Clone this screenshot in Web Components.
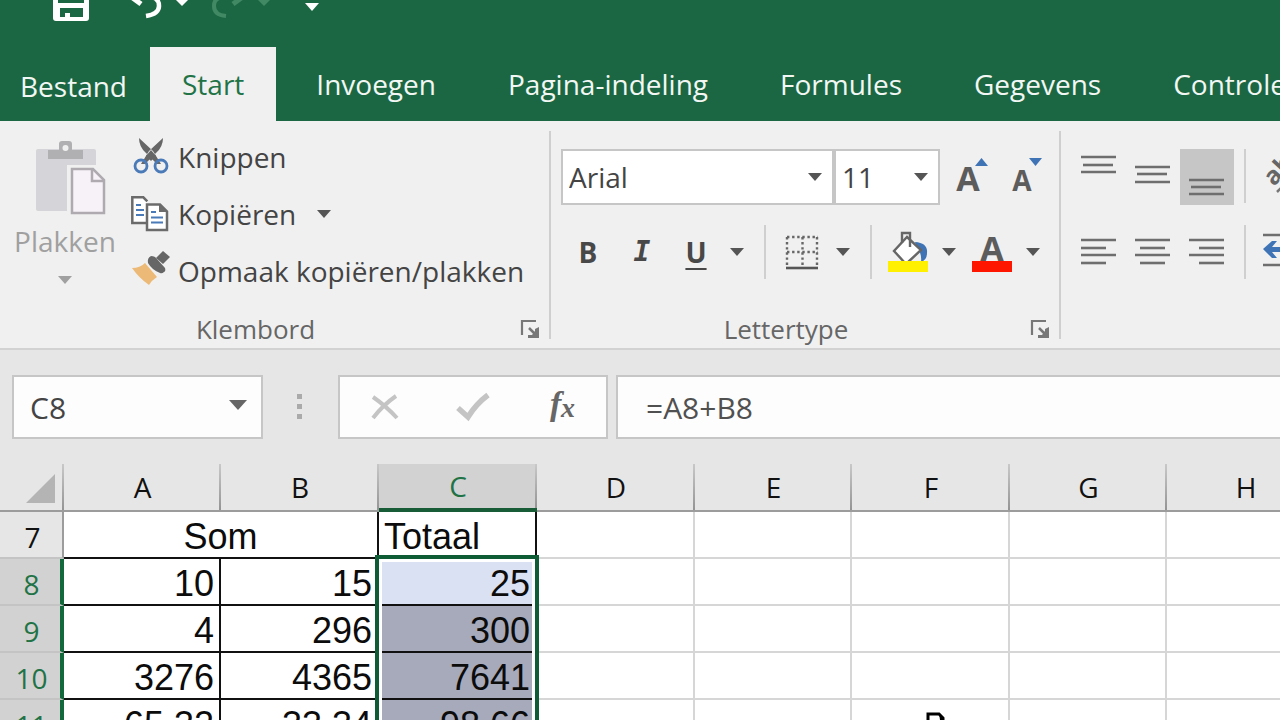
<!DOCTYPE html>
<html lang="nl">
<head>
<meta charset="utf-8">
<meta name="viewport" content="width=device-width, initial-scale=1">
<title>Werkblad</title>
<style>
  html, body { height: 100%; }
  body { margin: 0; overflow: hidden; background: #fff; color: #444; font: 28px/36px "Open Sans", "Noto Sans", sans-serif; }
</style>
</head>
<body>
<excel-app></excel-app>

<script>
(function () {
  // ---- icon set: [width, height, markup] ----
  const lines = (rows) => rows.map(([x, y, w]) => `<path d="M${x} ${y}h${w}" stroke="#6e6e6e" stroke-width="2.6"/>`).join("");
  const ICONS = {
    save: [36, 22, `<path fill="#fff" d="M0-10h36v28q0 3-3 3H3q-3 0-3-3zM5-10v13h26v-13zM7 8v9h5v-4h5v4h13V8z" fill-rule="evenodd"/>`],
    undo: [34, 20, `<path d="M1-4L12 4" stroke="#fff" stroke-width="5"/><path d="M17-3Q30-4 30 6q0 8-13 10" fill="none" stroke="#fff" stroke-width="4.5"/>`],
    redo: [34, 20, `<path d="M33-4L22 4" stroke="#418864" stroke-width="5"/><path d="M14-3Q3-3 3 6q0 9 12 10" fill="none" stroke="#418864" stroke-width="4"/>`],
    tip: [14, 20, `<path d="M0-1h14L7 6z" fill="currentColor"/>`],
    customize: [14, 20, `<path d="M0 3h14L7 11z" fill="#fff"/>`],
    arrow: [14, 8, `<path d="M0 0h14L7 8z" fill="currentColor"/>`],
    wide: [18, 10, `<path d="M0 0h18L9 10z" fill="currentColor"/>`],
    paste: [70, 76, `<rect y="8" width="60" height="62" rx="2" fill="#d5d5d9"/>
      <path d="M31 24h40v54H31z" fill="#f0f0f0"/>
      <path d="M12 18v-9h11V3q0-3 3-3h7q3 0 3 3v6h11v9z" fill="#b0b0b2"/><circle cx="29.5" cy="7" r="3" fill="#f0f0f0"/>
      <path d="M36 28h21l11 11v33H36z" fill="#f7f2f8" stroke="#aeaab0" stroke-width="2.5"/><path d="M56 28v12h12" fill="none" stroke="#aeaab0" stroke-width="2.5"/>`],
    cut: [38, 40, `<path d="M8 1Q8 10 15 16L26 27h4L22 14zM32 1Q32 10 25 16L14 27h-4L18 14z" fill="#666"/><path d="M20 13l5 6-5 5-5-5z" fill="#666"/>
      <g fill="none" stroke="#4a7ab8" stroke-width="2.8"><circle cx="10" cy="29" r="6"/><circle cx="30" cy="29" r="6"/></g>`],
    copy: [38, 36, `<path d="M15 27H1.3V1.3h11l4 4" fill="#fff" stroke="#6b6b6b" stroke-width="2.5"/>
      <path d="M5 9h5M5 14h8M5 19h8" stroke="#4a7ab8" stroke-width="2.2"/>
      <path d="M16 8.5h13l7 7V34H16z" fill="#fff" stroke="#6b6b6b" stroke-width="2.5"/><path d="M28 8v8h8z" fill="#6b6b6b"/>
      <path d="M20 16h5M20 21.5h12M20 26.5h12" stroke="#4a7ab8" stroke-width="2.2"/>`],
    brush: [40, 40, `<path d="M1 17q8 0 13-5l12 14q-5 3-8 8Q8 27 1 17z" fill="#ecba76"/>
      <path d="M20 5q4 0 6 3l8 9q1 3-1 4-2 2-4 1-8-3-12-10-1-5 3-7z" fill="#666"/><path d="M25 7l7-7 7 6-7 7z" fill="#666"/>`],
    launcher: [18, 18, `<path d="M1 15V1h14" fill="none" stroke="#777" stroke-width="2.2"/><path d="M8 8l6 6" stroke="#777" stroke-width="2.5"/><path d="M18 7v11H7v-3h4l3-4V9z" fill="#777"/>`],
    grow: [54, 56, `<text x="23" y="42" text-anchor="middle" font-weight="700" font-size="34" fill="#5c5c5c">A</text><path d="M30 17h13L36.5 9z" fill="#3e74b5"/>`],
    shrink: [54, 56, `<text x="23" y="42" text-anchor="middle" font-weight="700" font-size="28" fill="#5c5c5c">A</text><path d="M30 9h13L36.5 17z" fill="#3e74b5"/>`],
    borders: [34, 36, `<path d="M2 3h31M2 18h31" stroke="#666" stroke-width="2.4" stroke-dasharray="2.4 2.7"/>
      <path d="M2 3v28M17.500 3v28M32 3v28" stroke="#666" stroke-width="2.4" stroke-dasharray="2.4 2.7"/><path d="M1 34h32" stroke="#555" stroke-width="2.6"/>`],
    bucket: [40, 40, `<path d="M27 10q13 1 12 11 0 7-6 9 1-9-4-14z" fill="#3e74b5"/>
      <path d="M19 5L33 18 18 32 6 19z" fill="#fff" stroke="#666" stroke-width="2.4"/>
      <path d="M14 11V1h8V15" fill="none" stroke="#666" stroke-width="2.4"/><path d="M0 29h40v11H0z" fill="#ffef00"/>`],
    color: [40, 40, `<text x="20" y="29" text-anchor="middle" font-weight="700" font-size="34" fill="#5c5c5c">A</text><path d="M0 29h40v11H0z" fill="#ff1600"/>`],
    top: [54, 56, lines([[9, 8, 35], [11, 16, 30], [9, 23, 35]])],
    middle: [54, 56, lines([[9, 18, 35], [11, 25, 30], [9, 33, 35]])],
    bottom: [54, 56, lines([[9, 31, 35], [11, 38, 30], [9, 45, 35]])],
    left: [54, 54, lines([[9, 15, 35], [9, 23, 25], [9, 30, 35], [9, 38, 25]])],
    center: [54, 54, lines([[9, 15, 35], [14, 23, 25], [9, 30, 35], [14, 38, 25]])],
    right: [54, 54, lines([[9, 15, 35], [19, 23, 25], [9, 30, 35], [19, 38, 25]])],
    rotate: [54, 56, `<text transform="translate(28 38) rotate(-47)" font-weight="700" font-size="25" fill="#666">ab</text><path d="M31 43L52 22" stroke="#777" stroke-width="2.5"/>`],
    indent: [54, 54, lines([[17, 10, 35], [36, 20, 16], [36, 30, 16], [17, 40, 35]]) + `<path d="M17 24l9-8h5l-5 6h9v5h-9l5 6h-5z" fill="#3e74b5"/>`],
    cancel: [28, 26, `<path d="M2 3q13 9 24 21M25 2Q12 11 2 24" fill="none" stroke="#c4c4c4" stroke-width="4"/>`],
    enter: [34, 28, `<path d="M2 15l10 9Q20 11 32 2" fill="none" stroke="#c4c4c4" stroke-width="5.5"/>`],
    fx: [34, 34, `<g font-family="Liberation Serif, serif" font-style="italic" font-weight="700" fill="#666"><text x="4" y="25" font-size="34">f</text><text x="15" y="27" font-size="28">x</text></g>`],
    dots: [6, 26, `<path d="M0 0h5v5H0zM0 10h5v5H0zM0 20h5v5H0z" fill="#aaa"/>`],
    corner: [30, 30, `<path d="M30 1v29H1z" fill="#b4b4b4"/>`],
    pointer: [22, 24, `<path d="M3 24V2h11l4 4v18" fill="#fff" stroke="#000" stroke-width="3"/><path d="M14 1l5 5v18h-4V8z" fill="#000"/>`],
  };

  // base class: stamps css + html into an open shadow root
  class Base extends HTMLElement {
    constructor() { super(); this.attachShadow({ mode: "open" }); }
    connectedCallback() {
      this.shadowRoot.innerHTML = `<style>
        *,*::before,*::after{box-sizing:border-box}
        button,input,select{font:inherit;color:inherit;background:none;border:0;margin:0;padding:0;border-radius:0;outline:0}
        ${this.css()}</style>${this.html()}`;
    }
  }

  class AppIcon extends Base {
    css() { return `:host{display:block;flex:none} svg{display:block;overflow:visible}`; }
    html() {
      const [w, h, body] = ICONS[this.getAttribute("name")];
      return `<svg width="${w}" height="${h}" viewBox="0 0 ${w} ${h}" aria-hidden="true">${body}</svg>`;
    }
  }

  class QuickBar extends Base {
    css() {
      return `:host{display:flex;align-items:flex-start;height:47px;padding-left:53px;overflow:hidden;color:#fff}
        button{display:flex;margin-right:12px}
        .save{margin-right:40px}.tip{margin-right:22px}.dim{margin-right:34px;color:#418864}`;
    }
    html() {
      return `<button class="save" aria-label="Opslaan"><app-icon name="save"></app-icon></button>
        <button aria-label="Ongedaan maken"><app-icon name="undo"></app-icon></button>
        <button class="tip" aria-label="Meer stappen"><app-icon name="tip"></app-icon></button>
        <button aria-label="Opnieuw"><app-icon name="redo"></app-icon></button>
        <button class="dim" aria-label="Meer stappen opnieuw"><app-icon name="tip"></app-icon></button>
        <button aria-label="Werkbalk aanpassen"><app-icon name="customize"></app-icon></button>`;
    }
  }

  class RibbonTab extends Base {
    css() {
      return `:host{display:block;flex:none}
        a{display:flex;align-items:center;height:74px;padding:0 32px;color:#f2f7f4;text-decoration:none;white-space:nowrap}
        :host([file]) a{padding:4px 23px 0 20px}
        :host([active]) a{background:#f0f0f0;color:#217346}`;
    }
    html() { return `<a href="#"><slot></slot></a>`; }
  }

  class RibbonTabs extends Base {
    css() { return `:host{display:flex;overflow:hidden} ::slotted(ribbon-tab:nth-child(n+3)){margin-left:8px}`; }
    html() { return `<slot></slot>`; }
  }

  class RibbonGroup extends Base {
    css() {
      return `:host{display:flex;flex-direction:column;flex:none;height:208px;border-right:2px solid #cfcfcf}
        :host([open]){border-right:0}
        .body{flex:1}
        footer{display:flex;align-items:center;height:20px;padding-right:10px;font-size:26px;line-height:20px;color:#666}
        span{flex:1;text-align:center}
        button{display:flex;margin-left:10px}`;
    }
    html() {
      const label = this.getAttribute("label");
      return `<div class="body"><slot></slot></div>` + (label ? `<footer><span>${label}</span><button aria-label="${label} instellingen"><app-icon name="launcher"></app-icon></button></footer>` : "");
    }
  }

  class ClipboardTools extends Base {
    css() {
      return `:host{display:flex;height:171px}
        .paste{display:flex;flex-direction:column;align-items:center;width:130px;padding-top:10px;color:#a0a0a0}
        .paste app-icon[name=paste]{margin-left:12px}
        .paste app-icon[name=arrow]{margin-top:17px}
        .paste span{line-height:36px;margin-top:6px}
        .list{display:grid;grid-auto-rows:52px;row-gap:5px;align-content:start}
        .list button{display:flex;align-items:center;white-space:nowrap}
        .slot{display:flex;width:48px;padding-left:1px}
        .list .more{margin-left:21px;color:#555}
        .row{display:flex;align-items:center}`;
    }
    html() {
      return `<button class="paste"><app-icon name="paste"></app-icon><span>Plakken</span><app-icon name="arrow"></app-icon></button>
        <div class="list">
          <button><div class="slot"><app-icon name="cut"></app-icon></div>Knippen</button>
          <div class="row"><button><div class="slot"><app-icon name="copy"></app-icon></div>Kopiëren</button><button class="more" aria-label="Kopieeropties"><app-icon name="arrow"></app-icon></button></div>
          <button><div class="slot"><app-icon name="brush"></app-icon></div>Opmaak kopiëren/plakken</button>
        </div>`;
    }
  }

  class ComboBox extends Base {
    css() {
      return `:host{display:flex;position:relative;height:56px;border:2px solid #c6c6c6;background:#fff}
        select{appearance:none;width:100%;padding-left:6px;line-height:36px}
        app-icon{position:absolute;right:10px;top:22px;color:#555;pointer-events:none}`;
    }
    html() { return `<select aria-label="${this.getAttribute("label")}"><option>${this.getAttribute("value")}</option></select><app-icon name="arrow"></app-icon>`; }
  }

  class ToolButton extends Base {
    css() {
      return `:host{display:flex;flex:none}
        button{display:flex;align-items:center;justify-content:center;width:54px;height:54px}
        :host([tall]) button{height:56px}
        :host([pressed]) button{background:#c6c6c6}
        .more{width:28px;color:#555}`;
    }
    html() {
      const icon = this.getAttribute("icon"), label = this.getAttribute("label");
      return `<button aria-label="${label}">${icon ? `<app-icon name="${icon}"></app-icon>` : "<slot></slot>"}</button>` +
        (this.hasAttribute("split") ? `<button class="more" aria-label="${label} opties"><app-icon name="arrow"></app-icon></button>` : "");
    }
  }

  class FontTools extends Base {
    css() {
      return `:host{display:block;width:508px;padding:18px 0 0 10px}
        .row{display:flex}
        .row+.row{margin-top:20px}
        .name{width:273px}.size{width:106px;margin-right:5px}
        hr{width:2px;height:54px;margin:0 9px 0 13px;border:0;background:#cfcfcf}
        .next{margin-left:2px}
        b,i,u{font-weight:700;color:#484848}
        i{font-family:"DejaVu Sans Mono",monospace}
        u{text-underline-offset:5px;text-decoration-thickness:2px}`;
    }
    html() {
      return `<div class="row">
          <combo-box class="name" label="Lettertype" value="Arial"></combo-box>
          <combo-box class="size" label="Tekengrootte" value="11"></combo-box>
          <tool-button tall icon="grow" label="Groter"></tool-button>
          <tool-button tall icon="shrink" label="Kleiner"></tool-button>
        </div>
        <div class="row">
          <tool-button label="Vet"><b>B</b></tool-button>
          <tool-button label="Cursief"><i>I</i></tool-button>
          <tool-button split label="Onderstrepen"><u>U</u></tool-button>
          <hr>
          <tool-button split icon="borders" label="Randen"></tool-button>
          <hr>
          <tool-button split icon="bucket" label="Opvulkleur"></tool-button>
          <tool-button class="next" split icon="color" label="Tekstkleur"></tool-button>
        </div>`;
    }
  }

  class AlignTools extends Base {
    css() {
      return `:host{display:block;padding:18px 0 0 11px}
        .row{display:flex}
        .row+.row{margin-top:20px}
        hr{width:2px;height:54px;margin:0 0 0 10px;border:0;background:#cfcfcf}`;
    }
    html() {
      return `<div class="row">
          <tool-button tall icon="top" label="Boven uitlijnen"></tool-button>
          <tool-button tall icon="middle" label="Midden uitlijnen"></tool-button>
          <tool-button tall pressed icon="bottom" label="Onder uitlijnen"></tool-button>
          <hr>
          <tool-button tall icon="rotate" label="Afdrukstand"></tool-button>
        </div>
        <div class="row">
          <tool-button icon="left" label="Links uitlijnen"></tool-button>
          <tool-button icon="center" label="Centreren"></tool-button>
          <tool-button icon="right" label="Rechts uitlijnen"></tool-button>
          <hr>
          <tool-button icon="indent" label="Inspringing verkleinen"></tool-button>
        </div>`;
    }
  }

  class FormulaBar extends Base {
    css() {
      return `:host{display:flex;align-items:center;padding:25px 0;background:#e6e6e6;font-size:30px}
        .box{display:flex;align-items:center;height:64px;border:2px solid #c6c6c6;background:#fdfdfd}
        .ref{width:251px;margin-left:12px;padding:0 14px 0 16px}
        .ref input{flex:1;min-width:0}
        .ref button{display:flex;color:#666;margin-bottom:4px}
        .grip{margin:0 35px 0 34px}
        .keys{width:270px;justify-content:space-between;padding:0 26px 0 31px}
        .keys button{display:flex}
        .edit{flex:1;margin:0 -2px 0 8px;padding-left:28px}
        input{padding-top:2px}
        .edit input{width:100%;color:#505050}`;
    }
    html() {
      return `<div class="box ref"><input aria-label="Naamvak" value="C8"><button aria-label="Namen"><app-icon name="wide"></app-icon></button></div>
        <app-icon class="grip" name="dots"></app-icon>
        <div class="box keys">
          <button aria-label="Annuleren"><app-icon name="cancel"></app-icon></button>
          <button aria-label="Invoeren"><app-icon name="enter"></app-icon></button>
          <button aria-label="Functie invoegen"><app-icon name="fx"></app-icon></button>
        </div>
        <div class="box edit"><input aria-label="Formule" value="=A8+B8"></div>`;
    }
  }

  // column widths in px, border included
  const COLS = { A: 157, B: 158, C: 158, D: 158, E: 157, F: 158, G: 157, H: 158 };
  const ROWS = [[8, "10", "15", "25"], [9, "4", "296", "300"], [10, "3276", "4365", "7641"], [11, "65,32", "33,34", "98,66"]];

  class SheetGrid extends Base {
    css() {
      return `:host{display:block;position:relative}
        table{table-layout:fixed;width:0;border-collapse:separate;border-spacing:0;background:#fff}
        th,td{height:47px;padding:0 5px;border:solid #d6d6d6;border-width:0 2px 2px 0;line-height:40px;white-space:nowrap}
        td{padding-top:5px;font-family:"Liberation Sans",Arial,sans-serif;font-size:36px;color:#0c0c0c;text-align:right}
        thead th{height:48px;border-right:0;border-bottom-color:#9c9c9c;font-size:28px;font-weight:400;color:#111;
          background:linear-gradient(#c8c8c8,#949494) right/2px 100% no-repeat #e6e6e6}
        thead th.on{background-color:#d2d2d2;color:#217346;border-bottom:4px solid #185c37}
        thead app-icon{float:right;margin:2px 4px 0 0}
        tbody th{padding:4px 0 0 3px;font-size:28px;font-weight:400;color:#111;background:#e6e6e6;border-right-color:#9c9c9c;border-bottom-color:#c4c4c4}
        tbody th.on{background:#d2d2d2;color:#217346;border-right:4px solid #13693c}
        .k{border-color:#111}
        .som{text-align:center}.tot{text-align:left}
        .sum{position:relative;z-index:0;background:#a7aabb}
        .first{z-index:1;background:#d9e1f3}
        .sel{position:absolute;left:-4px;right:-4px;top:-4px;height:200px;border:4px solid #0e5c36;box-shadow:inset 0 0 0 3px #fff;pointer-events:none}
        .ptr{position:absolute;left:925px;top:248px}`;
    }
    html() {
      const names = Object.keys(COLS);
      const empty = names.slice(3).map(() => "<td></td>").join("");
      const rows = ROWS.map(([n, a, b, c], i) => `<tr><th class="on" scope="row">${n}</th><td class="k">${a}</td><td class="k">${b}</td>
        <td class="k sum${i ? "" : " first"}">${c}${i ? "" : '<div class="sel"></div>'}</td>${empty}</tr>`).join("");
      return `<table>
        <colgroup><col style="width:64px">${names.map((n) => `<col style="width:${COLS[n]}px">`).join("")}</colgroup>
        <thead><tr><th><app-icon name="corner"></app-icon></th>${names.map((n) => `<th scope="col"${n === "C" ? ' class="on"' : ""}>${n}</th>`).join("")}</tr></thead>
        <tbody><tr><th scope="row">7</th><td class="k som" colspan="2">Som</td><td class="k tot">Totaal</td>${empty}</tr>${rows}</tbody>
      </table><app-icon class="ptr" name="pointer"></app-icon>`;
    }
  }

  class ExcelApp extends Base {
    css() {
      return `:host{display:flex;flex-direction:column;height:100vh;overflow:hidden}
        header{flex:none;background:#1c6743}
        .ribbon{display:flex;flex:none;padding:10px 0 9px;background:#f0f0f0;border-bottom:2px solid #d2d2d2;overflow:hidden}
        .clip{width:551px}
        formula-bar{flex:none}
        sheet-grid{flex:1;min-height:0;overflow:hidden}`;
    }
    html() {
      const tabs = ["Invoegen", "Pagina-indeling", "Formules", "Gegevens", "Controleren"];
      return `<header><quick-bar></quick-bar>
          <ribbon-tabs><ribbon-tab file>Bestand</ribbon-tab><ribbon-tab active>Start</ribbon-tab>${tabs.map((t) => `<ribbon-tab>${t}</ribbon-tab>`).join("")}</ribbon-tabs></header>
        <div class="ribbon">
          <ribbon-group class="clip" label="Klembord"><clipboard-tools></clipboard-tools></ribbon-group>
          <ribbon-group label="Lettertype"><font-tools></font-tools></ribbon-group>
          <ribbon-group open><align-tools></align-tools></ribbon-group>
        </div>
        <formula-bar></formula-bar>
        <sheet-grid></sheet-grid>`;
    }
  }

  const define = (tag, cls) => { if (!customElements.get(tag)) customElements.define(tag, cls); };
  define("app-icon", AppIcon);
  define("quick-bar", QuickBar);
  define("ribbon-tab", RibbonTab);
  define("ribbon-tabs", RibbonTabs);
  define("ribbon-group", RibbonGroup);
  define("clipboard-tools", ClipboardTools);
  define("combo-box", ComboBox);
  define("tool-button", ToolButton);
  define("font-tools", FontTools);
  define("align-tools", AlignTools);
  define("formula-bar", FormulaBar);
  define("sheet-grid", SheetGrid);
  define("excel-app", ExcelApp);
})();
</script>
</body>
</html>
